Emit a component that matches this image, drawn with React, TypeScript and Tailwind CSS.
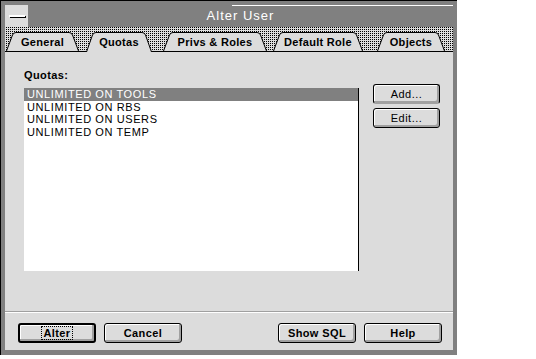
import React from "react";

type TabProps = {
    label: string;
    width: number;
    widthClass: string;
    selected?: boolean;
    className?: string;
};

const Tab: React.FC<TabProps> = (props): React.ReactElement => {
    const w = props.width;
    const h = props.selected ? 20 : 19;
    const s = 6;
    const outline = `M0.5,${h} L${s + 0.5},3 Q${s + 1.5},0.5 ${s + 4},0.5 L${w - s - 4},0.5 Q${w - s - 1.5},0.5 ${w - s - 0.5},3 L${w - 0.5},${h}`;

    return (
        <div
            className={`relative flex items-center justify-center ${props.widthClass} ${
                props.selected ? "h-[20px] -mb-px z-10" : "h-[19px]"
            } ${props.className ?? ""}`}
        >
            <svg className="absolute inset-0" width={w} height={h} viewBox={`0 0 ${w} ${h}`}>
                <path d={`${outline} Z`} fill="#dcdcdc" stroke="none" />
                <path d={outline} fill="none" stroke="#000" strokeWidth={1} />
            </svg>
            <span className="relative pt-px text-[11px] font-bold tracking-[0.3px] text-black">{props.label}</span>
        </div>
    );
};

const Button: React.FC<{
    label: string;
    isDefault?: boolean;
    bold?: boolean;
    widthClass: string;
    extraClass?: string;
}> = (props): React.ReactElement => {
    return (
        <button
            type="button"
            className={`${props.widthClass} h-[20px] flex items-center justify-center rounded-[3px] border-black bg-[#dcdcdc] text-[11px] text-black shadow-[inset_-2px_-2px_0_#a0a0a0,inset_1px_1px_0_#fff] ${
                props.isDefault ? "border-2" : "border"
            } ${props.bold ? "font-bold tracking-[0.4px]" : "tracking-[0.5px]"} ${props.extraClass ?? ""}`}
        >
            {props.isDefault ? (
                <span className="border border-dotted border-black px-px leading-[12px]">{props.label}</span>
            ) : (
                <span className="leading-[12px]">{props.label}</span>
            )}
        </button>
    );
};

const quotas: string[] = ["UNLIMITED ON TOOLS", "UNLIMITED ON RBS", "UNLIMITED ON USERS", "UNLIMITED ON TEMP"];

export default function App(): React.ReactElement {
    const [selected, setSelected] = React.useState<number>(0);

    return (
        <div className="w-[536px] h-[359px] bg-white flex items-start font-['Liberation_Sans',Arial,sans-serif]">
            <div className="w-[457px] h-[355px] bg-[#808080] border-l border-t border-black pl-[4px] pt-[4px] pr-[4px] pb-[5px] flex flex-col">
                {/* title bar */}
                <div className="h-[22px] flex">
                    <div className="w-[23px] h-full bg-[#dcdcdc] flex items-center justify-center">
                        <div className="w-[16px] h-[2px] bg-white shadow-[1px_1px_0_#000]" />
                    </div>
                    <div className="relative flex-1 flex items-center justify-center bg-[#808080]">
                        <div className="absolute left-[204px] right-0 top-0 h-px bg-white" />
                        <span className="text-[13px] tracking-[1px] text-white">Alter User</span>
                    </div>
                </div>

                {/* tabs */}
                <div className="h-[25px] flex items-end pl-px border-b border-black bg-[#dcdcdc] bg-[image:conic-gradient(#000_25%,transparent_0)] bg-[length:2px_2px]">
                    <Tab label="General" width={73} widthClass="w-[73px]" />
                    <Tab label="Quotas" width={66} widthClass="w-[66px]" selected className="ml-[7px]" />
                    <Tab label="Privs & Roles" width={104} widthClass="w-[104px]" className="ml-[11px]" />
                    <Tab label="Default Role" width={90} widthClass="w-[90px]" className="ml-[6px]" />
                    <Tab label="Objects" width={68} widthClass="w-[68px]" className="ml-[14px]" />
                </div>

                {/* body */}
                <div className="flex-1 flex flex-col bg-[#dcdcdc]">
                    <div className="flex-1 flex pl-[19px]">
                        <div className="flex flex-col">
                            <div className="mt-[16px] h-[14px] leading-[14px] text-[11px] font-bold tracking-[0.4px] text-black">
                                Quotas:
                            </div>
                            <div className="mt-[6px] w-[335px] h-[183px] bg-white border-r border-black">
                                {quotas.map((q, i) => (
                                    <div
                                        key={q}
                                        onClick={() => setSelected(i)}
                                        className={`h-[12.7px] leading-[12.7px] pl-[3px] text-[11px] tracking-[0.6px] ${
                                            selected === i ? "bg-[#808080] text-white" : "text-black"
                                        }`}
                                    >
                                        {q}
                                    </div>
                                ))}
                            </div>
                        </div>
                        <div className="ml-[14px] pt-[32px] flex flex-col gap-[4px]">
                            <Button label="Add..." widthClass="w-[67px]" extraClass="border-b-[#a0a0a0]" />
                            <Button label="Edit..." widthClass="w-[67px]" />
                        </div>
                    </div>

                    <div className="border-t border-[#a0a0a0]">
                        <div className="border-t border-white pt-[10px] pb-[7px] pl-[13px] pr-[11px] flex">
                            <Button label="Alter" isDefault bold widthClass="w-[78px]" />
                            <div className="ml-[8px]">
                                <Button label="Cancel" bold widthClass="w-[78px]" />
                            </div>
                            <div className="flex-1" />
                            <Button label="Show SQL" bold widthClass="w-[78px]" />
                            <div className="ml-[8px]">
                                <Button label="Help" bold widthClass="w-[78px]" />
                            </div>
                        </div>
                    </div>
                </div>
            </div>
        </div>
    );
}
